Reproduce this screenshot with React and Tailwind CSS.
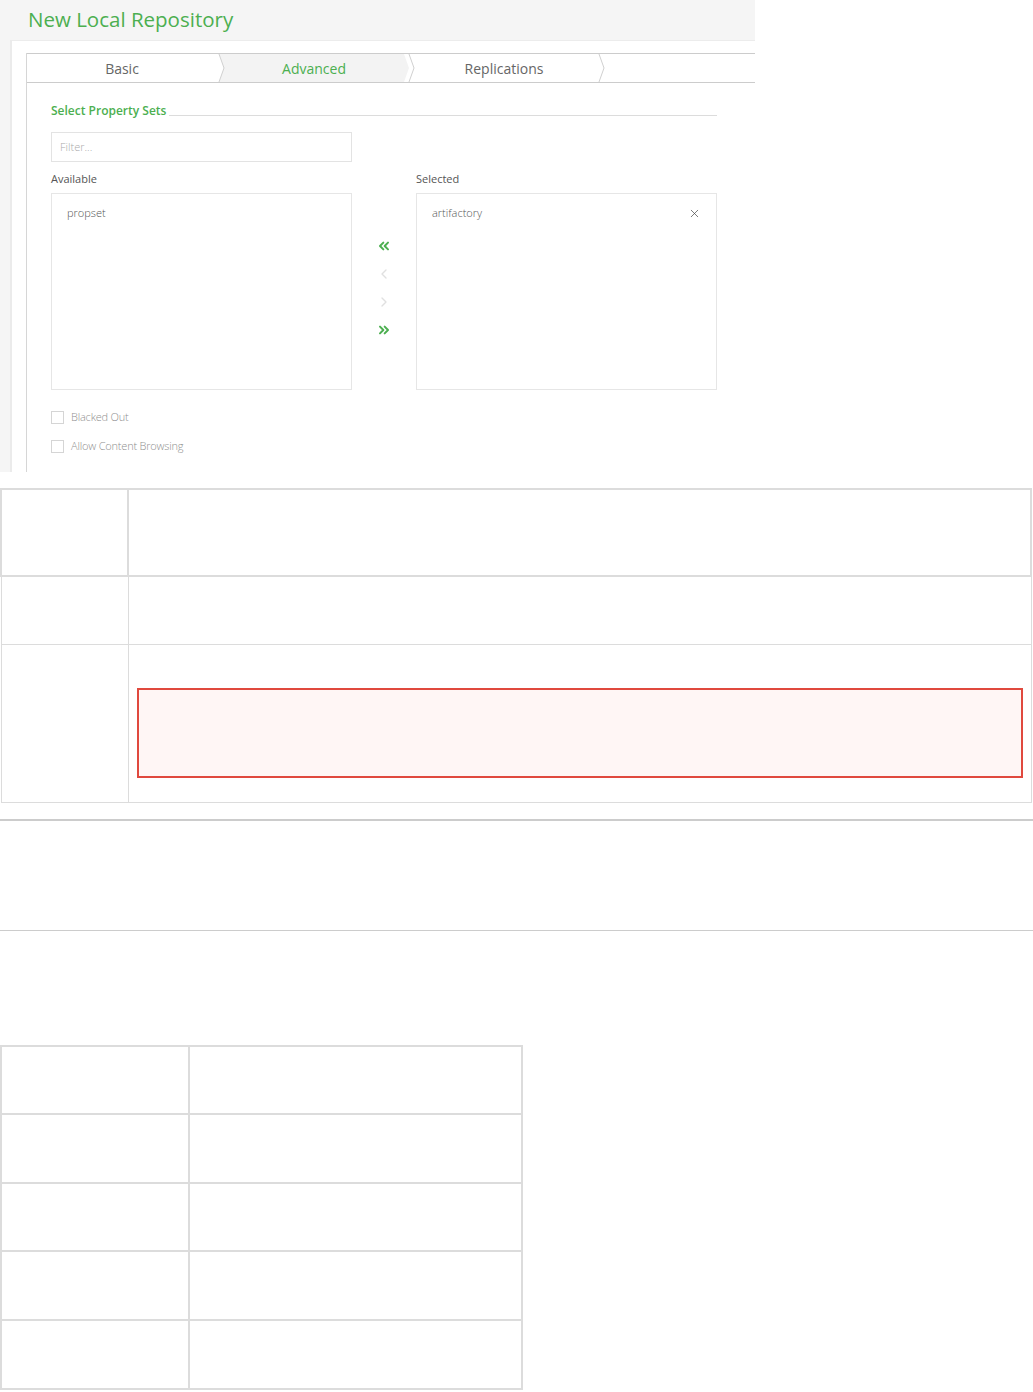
import { ChevronsLeft, ChevronsRight, ChevronLeft, ChevronRight, X } from 'lucide-react';

const GREEN = 'text-[#4caf50]';

const Chevron = ({ left }) => (
  <svg className={`absolute top-0 h-full w-[8px] ${left}`} viewBox="0 0 8 29" preserveAspectRatio="none">
    <path d="M1 0 L6 14.5 L1 29" fill="none" stroke="#cfcfcf" strokeWidth="1" />
  </svg>
);

const Tabs = () => (
  <div className="flex h-[30px] border-y border-[#cccccc] text-[14px] relative">
    <div className="w-[192px] flex items-center justify-center text-[#666] pr-[2px]">
      Basic
    </div>
    <div className="w-[190px] flex items-center justify-center text-[#4caf50] bg-[#f3f3f3] [clip-path:polygon(0_0,185px_0,190px_50%,185px_100%,0_100%,5px_50%)]">
      Advanced
    </div>
    <div className="w-[190px] flex items-center justify-center text-[#666]">
      Replications
    </div>
    <Chevron left="left-[191px]" />
    <Chevron left="left-[381px]" />
    <Chevron left="left-[571px]" />
  </div>
);

const Checkbox = ({ label }) => (
  <div className="flex items-center gap-[7px] h-[13px]">
    <span className="w-[13px] h-[13px] border border-[#d5d5d5] bg-white" />
    <span className="text-[11px] font-light text-[#8f8f8f] tracking-[-0.2px]">{label}</span>
  </div>
);

const Screenshot = () => (
  <div className="w-[755px] h-[472px] bg-[#f5f5f5] flex flex-col">
    <div className="h-[40px] flex items-center pl-[28px] text-[20.5px] text-[#4caf50] pb-[2px]">
      New Local Repository
    </div>
    <div className="flex-1 flex">
      <div className="w-[10px]" />
      <div className="flex-1 bg-white border-l-2 border-[#ebebeb] border-t border-t-[#ececec] pl-[14px] pt-[12px]">
        <div className="h-full border-l border-[#d6d6d6]">
          <Tabs />
          <div className="pl-[24px] pr-[38px] pt-[20px]">
            <div className="flex items-end gap-[3px]">
              <span className={`text-[12px] font-semibold ${GREEN} leading-[16px]`}>Select Property Sets</span>
              <div className="flex-1 border-b border-[#dcdcdc] mb-[3px]" />
            </div>
            <div className="mt-[13px] w-[301px] h-[30px] border border-[#e3e3e3] flex items-center pl-[8px] text-[11px] font-light text-[#aaaaaa]">
              Filter...
            </div>
            <div className="mt-[10px] flex">
              <div className="w-[301px]">
                <div className="text-[11px] text-[#555] h-[14px] leading-[14px]">Available</div>
                <div className="mt-[7px] h-[197px] border border-[#e6e6e6] pl-[15px] pt-[11px] text-[11px] font-light text-[#555]">
                  propset
                </div>
              </div>
              <div className="w-[64px] flex flex-col items-center pt-[66px] gap-[12px]">
                <ChevronsLeft size={16} strokeWidth={3} className="text-[#4caf50]" />
                <ChevronLeft size={16} strokeWidth={2} className="text-[#e0e0e0]" />
                <ChevronRight size={16} strokeWidth={2} className="text-[#e0e0e0]" />
                <ChevronsRight size={16} strokeWidth={3} className="text-[#4caf50]" />
              </div>
              <div className="w-[301px]">
                <div className="text-[11px] text-[#555] h-[14px] leading-[14px]">Selected</div>
                <div className="mt-[7px] h-[197px] border border-[#e6e6e6] pl-[15px] pr-[15px] pt-[11px] text-[11px] font-light text-[#555]">
                  <div className="flex items-center justify-between">
                    <span>artifactory</span>
                    <X size={13} strokeWidth={1.3} className="text-[#444]" />
                  </div>
                </div>
              </div>
            </div>
            <div className="mt-[21px] flex flex-col gap-[16px]">
              <Checkbox label="Blacked Out" />
              <Checkbox label="Allow Content Browsing" />
            </div>
          </div>
        </div>
      </div>
    </div>
  </div>
);

export default function App() {
  return (
    <div className="w-[1033px] min-h-[1392px] bg-white font-['Open_Sans',sans-serif]">
      <Screenshot />

      {/* first table */}
      <table className="mt-[16px] w-[1032px] border-collapse border border-[#dcdcdc]">
        <tbody>
          <tr className="h-[87px]">
            <td className="w-[127px] border-2 border-[#dcdcdc]" />
            <td className="border-2 border-[#dcdcdc]" />
          </tr>
          <tr className="h-[68px]">
            <td className="border border-[#dcdcdc]" />
            <td className="border border-[#dcdcdc]" />
          </tr>
          <tr className="h-[158px]">
            <td className="border border-[#dcdcdc]" />
            <td className="border border-[#dcdcdc] px-[8px] pt-[43px] pb-[24px] align-top">
              <div className="h-[90px] border-2 border-[#e0493e] bg-[#fff6f5]" />
            </td>
          </tr>
        </tbody>
      </table>

      <div className="mt-[16px] border-t-2 border-[#cccccc]" />
      <div className="mt-[109px] border-t border-[#cccccc]" />

      {/* second table */}
      <table className="mt-[114px] w-[523px] border-collapse">
        <tbody>
          {[68, 69, 68, 69, 69].map((h, i) => (
            <tr key={i} style={{ height: h }}>
              <td className="w-[188px] border-2 border-[#dcdcdc]" />
              <td className="border-2 border-[#dcdcdc]" />
            </tr>
          ))}
        </tbody>
      </table>
    </div>
  );
}
